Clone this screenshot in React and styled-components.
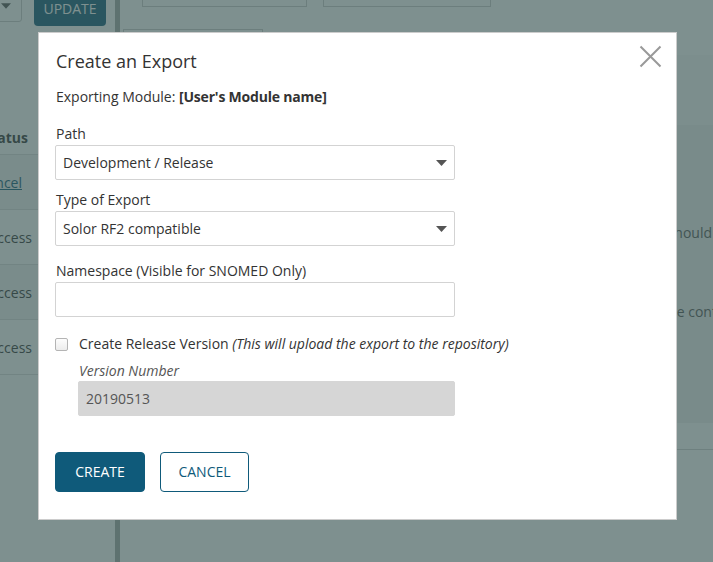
import React from 'react'
import styled, { createGlobalStyle } from 'styled-components'

const GlobalStyle = createGlobalStyle`
  html, body {
    margin: 0;
    padding: 0;
    height: 100%;
    overflow: hidden;
  }
  body {
    font-family: "Open Sans", "Noto Sans", Arial, sans-serif;
    font-size: 14px;
    color: #333;
    background: #fff;
  }
  * { box-sizing: border-box; }
`;

/* ---------- page behind the dialog ---------- */

const Page = styled.div`
  display: flex;
  height: 572px;
  margin-top: -10px;
  overflow: hidden;
`;

const Sidebar = styled.aside`
  width: 115px;
  flex-shrink: 0;
  overflow: hidden;
  background: #fff;
`;

const SidebarInner = styled.div`
  width: 175px;
  margin-left: -60px;
`;

const Toolbar = styled.div`
  display: flex;
  align-items: flex-start;
  gap: 12px;
  height: 130px;
  padding-left: 2px;
`;

const FilterSelect = styled.div`
  width: 80px;
  height: 32px;
  border: 1px solid #ccc;
  border-radius: 3px;
  display: flex;
  align-items: center;
  justify-content: flex-end;
  padding-right: 10px;
`;

const UpdateButton = styled.button`
  width: 72px;
  height: 36px;
  border: 0;
  border-radius: 4px;
  background: #0f5a7a;
  color: #fff;
  font: 14px "Open Sans", sans-serif;
  text-transform: uppercase;
`;

const Row = styled.div`
  height: ${p => (p.$head ? 35 : 55)}px;
  display: flex;
  align-items: center;
  justify-content: flex-end;
  padding-right: ${p => p.$pad}px;
  border-bottom: 1px solid #ddd;
  background: ${p => (p.$stripe ? '#f2f2f2' : '#fff')};
  font-weight: ${p => (p.$head ? 700 : 400)};
  font-size: 14px;
  color: #333;
`;

const RowLink = styled.a`
  color: #0f5a7a;
  text-decoration: underline;
`;

const Divider = styled.div`
  width: 5px;
  flex-shrink: 0;
  background: #a4aaa7;
`;

const Main = styled.main`
  flex: 1;
  overflow: hidden;
  display: flex;
  flex-direction: column;
  background: #fff;
`;

const MainHeader = styled.div`
  height: 65px;
  display: flex;
  flex-direction: column;
`;

const TopInputs = styled.div`
  display: flex;
  gap: 16px;
  padding-left: 22px;
`;

const TopBox = styled.div`
  width: ${p => p.$w}px;
  height: 17px;
  border: 1px solid #ccc;
  border-top: 0;
`;

const Tab = styled.div`
  width: 140px;
  margin: 22px 0 0 3px;
  flex: 1;
  border: 1px solid #ccc;
  border-bottom: 0;
`;

const SubHeader = styled.div`
  height: 70px;
  background: #f8f8f8;
`;

const Notice = styled.section`
  height: 298px;
  background: #f0f0f0;
  display: flex;
  flex-direction: column;
  padding-top: 98px;
  gap: 59px;
`;

const NoticeLine = styled.p`
  margin: 0 ${p => p.$edge}px 0 0;
  white-space: nowrap;
  text-align: right;
  line-height: 20px;
  color: #555;
`;

const Footer = styled.div`
  height: 27px;
  border-bottom: 1px solid #d2d2d2;
`;

/* ---------- dialog ---------- */

const Overlay = styled.div`
  position: fixed;
  inset: 0;
  background: rgba(57, 85, 83, 0.65);
  display: flex;
  align-items: flex-start;
  padding: 32px 0 0 38px;
`;

const Dialog = styled.div`
  position: relative;
  width: 639px;
  background: #fff;
  border: 1px solid #ccc;
  padding: 16px 16px 27px 17px;
`;

const CloseButton = styled.button`
  position: absolute;
  top: 12px;
  right: 14px;
  width: 23px;
  height: 23px;
  padding: 0;
  border: 0;
  background: none;
  display: flex;
`;

const Title = styled.h2`
  margin: 0;
  font-size: 18px;
  font-weight: 400;
  line-height: 24px;
  color: #333;
`;

const Subtitle = styled.p`
  margin: 14px 0 0;
  line-height: 20px;
  strong { font-weight: 700; letter-spacing: -0.2px; }
`;

const Field = styled.div`
  margin-top: ${p => p.$top}px;
  margin-left: ${p => (p.$indent || 0) - 1}px;
  display: flex;
  flex-direction: column;
  width: ${p => 400 - (p.$indent || 0)}px;
`;

const Label = styled.label`
  line-height: 20px;
  margin-bottom: ${p => (p.$hint ? 0 : 1)}px;
  margin-left: 1px;
  color: ${p => (p.$hint ? '#555' : '#333')};
  font-style: ${p => (p.$hint ? 'italic' : 'normal')};
`;

const SelectBox = styled.div`
  height: 35px;
  border: 1px solid #d3d3d3;
  border-radius: 2px;
  display: flex;
  align-items: center;
  justify-content: space-between;
  padding: 0 7px 0 7px;
  color: #333;
`;

const TextInput = styled.input`
  height: 35px;
  border: 1px solid ${p => (p.disabled ? '#d6d6d6' : '#d3d3d3')};
  border-radius: 2px;
  background: ${p => (p.disabled ? '#d6d6d6' : '#fff')};
  padding: 0 7px;
  font: 14px "Open Sans", sans-serif;
  color: #555;
  -webkit-text-fill-color: #555;
  opacity: 1;
  outline: none;
`;

const CheckRow = styled.label`
  margin-top: 17px;
  margin-left: -1px;
  display: flex;
  align-items: center;
  gap: 11px;
  line-height: 20px;
  em { color: #333; }
`;

const Checkbox = styled.input`
  appearance: none;
  margin: 0;
  width: 13px;
  height: 13px;
  border: 1px solid #b4b4b4;
  border-radius: 2px;
  background: linear-gradient(#fdfdfd, #ececec);
`;

const Actions = styled.div`
  margin-top: 36px;
  margin-left: -1px;
  display: flex;
  gap: 15px;
`;

const Button = styled.button`
  width: ${p => p.$w}px;
  height: 40px;
  border-radius: 4px;
  border: 1px solid #0f5a7a;
  background: ${p => (p.$primary ? '#0f5a7a' : '#fff')};
  color: ${p => (p.$primary ? '#fff' : '#0f5a7a')};
  font: 14px "Open Sans", sans-serif;
  line-height: 38px;
  padding: 0;
  text-transform: uppercase;
  cursor: pointer;
`;

const Caret = ({ size = 11 }) => (
  <svg width={size} height={Math.round(size * 0.55)} viewBox="0 0 11 6">
    <path d="M0 0h11L5.5 6z" fill="#555" />
  </svg>
)

const Select = ({ value }) => (
  <SelectBox>
    <span>{value}</span>
    <Caret />
  </SelectBox>
)

const BackgroundPage = () => (
  <Page>
    <Sidebar>
      <SidebarInner>
        <Toolbar>
          <FilterSelect><Caret size={10} /></FilterSelect>
          <UpdateButton>Update</UpdateButton>
        </Toolbar>
        <Row $head $pad={87}>Status</Row>
        <Row $stripe $pad={93}><RowLink>Cancel</RowLink></Row>
        <Row $pad={83}>Success</Row>
        <Row $stripe $pad={83}>Success</Row>
        <Row $pad={83}>Success</Row>
      </SidebarInner>
    </Sidebar>
    <Divider />
    <Main>
      <MainHeader>
        <TopInputs>
          <TopBox $w={165} />
          <TopBox $w={168} />
        </TopInputs>
        <Tab />
      </MainHeader>
      <SubHeader />
      <Notice>
        <NoticeLine $edge={1}>The exported file should</NoticeLine>
        <NoticeLine $edge={-29}>Please review the content.</NoticeLine>
      </Notice>
      <Footer />
    </Main>
  </Page>
)

const ExportDialog = () => (
  <Overlay>
    <Dialog>
      <CloseButton aria-label="Close">
        <svg width="23" height="23" viewBox="0 0 23 23">
          <path d="M1.5 1.5l20 20M21.5 1.5l-20 20" stroke="#999" strokeWidth="2" fill="none" />
        </svg>
      </CloseButton>
      <Title>Create an Export</Title>
      <Subtitle>Exporting Module: <strong>[User's Module name]</strong></Subtitle>

      <Field $top={17}>
        <Label>Path</Label>
        <Select value="Development / Release" />
      </Field>

      <Field $top={10}>
        <Label>Type of Export</Label>
        <Select value="Solor RF2 compatible" />
      </Field>

      <Field $top={15}>
        <Label>Namespace (Visible for SNOMED Only)</Label>
        <TextInput type="text" />
      </Field>

      <CheckRow>
        <Checkbox type="checkbox" />
        <span>Create Release Version <em>(This will upload the export to the repository)</em></span>
      </CheckRow>

      <Field $top={7} $indent={23}>
        <Label $hint>Version Number</Label>
        <TextInput type="text" value="20190513" disabled readOnly />
      </Field>

      <Actions>
        <Button $primary $w={90}>Create</Button>
        <Button $w={89}>Cancel</Button>
      </Actions>
    </Dialog>
  </Overlay>
)

export default function App() {
  return (
    <>
      <GlobalStyle />
      <BackgroundPage />
      <ExportDialog />
    </>
  )
}
